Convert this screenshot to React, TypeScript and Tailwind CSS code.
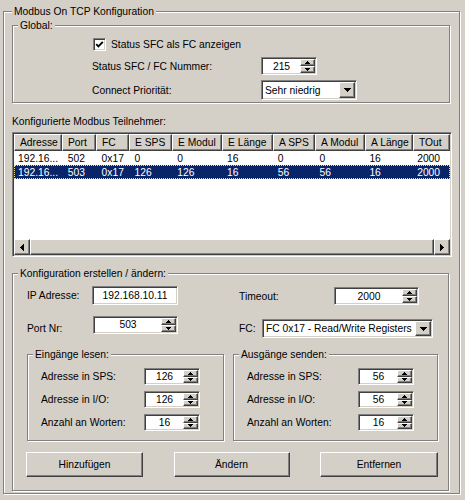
import React from "react";

const etched = "border border-[#808080] shadow-[inset_1px_1px_0_#fff,1px_1px_0_#fff]";
const sunken =
  "border border-t-[#808080] border-l-[#808080] border-r-white border-b-white shadow-[inset_1px_1px_0_#404040,inset_-1px_-1px_0_#d4d0c8]";
const raised =
  "border border-t-white border-l-white border-r-[#404040] border-b-[#404040] shadow-[inset_-1px_-1px_0_#808080] bg-[#d4d0c8]";

type Dir = "up" | "down" | "left" | "right";

const Arrow = ({ dir, size = "sm" }: { dir: Dir; size?: "sm" | "md" }) => {
  const s = size === "sm" ? 3 : 4;
  if (dir === "up" || dir === "down") {
    const w = s * 2 - 1;
    const d = dir === "up" ? `M${w / 2} 0 L${w} ${s} L0 ${s}Z` : `M0 0 L${w} 0 L${w / 2} ${s}Z`;
    return (
      <svg width={w} height={s} viewBox={`0 0 ${w} ${s}`} shapeRendering="crispEdges">
        <path d={d} fill="#000" />
      </svg>
    );
  }
  const h = s * 2 - 1;
  const d = dir === "left" ? `M0 ${h / 2} L${s} 0 L${s} ${h}Z` : `M0 0 L${s} ${h / 2} L0 ${h}Z`;
  return (
    <svg width={s} height={h} viewBox={`0 0 ${s} ${h}`} shapeRendering="crispEdges">
      <path d={d} fill="#000" />
    </svg>
  );
};

const SpinBox = ({ value, className }: { value: string; className: string }) => (
  <div className={`flex bg-white p-[1px] ${sunken} ${className}`}>
    <span className="flex-1 flex items-center justify-center">{value}</span>
    <div className="flex flex-col w-[15px]">
      <div className={`flex-1 flex items-center justify-center ${raised}`}>
        <Arrow dir="up" />
      </div>
      <div className={`flex-1 flex items-center justify-center ${raised}`}>
        <Arrow dir="down" />
      </div>
    </div>
  </div>
);

const Combo = ({ value, className }: { value: string; className: string }) => (
  <div className={`flex bg-white p-[1px] ${sunken} ${className}`}>
    <span className="flex-1 flex items-center pl-[2px] whitespace-nowrap overflow-hidden">{value}</span>
    <div className={`w-[16px] flex items-center justify-center ${raised}`}>
      <Arrow dir="down" size="md" />
    </div>
  </div>
);

const Button = ({ label, className }: { label: string; className: string }) => (
  <div className={`h-[25px] flex items-center justify-center ${raised} ${className}`}>{label}</div>
);

const columns = [
  { name: "Adresse", w: "w-[48px]" },
  { name: "Port", w: "w-[34px]" },
  { name: "FC", w: "w-[33px]" },
  { name: "E SPS", w: "w-[43px]" },
  { name: "E Modul", w: "w-[50px]" },
  { name: "E Länge", w: "w-[51px]" },
  { name: "A SPS", w: "w-[42px]" },
  { name: "A Modul", w: "w-[50px]" },
  { name: "A Länge", w: "w-[48px]" },
  { name: "TOut", w: "w-[37px]" },
];

const rows = [
  ["192.16...", "502", "0x17", "0", "0", "16", "0", "0", "16", "2000"],
  ["192.16...", "503", "0x17", "126", "126", "16", "56", "56", "16", "2000"],
];

const FieldRow = ({ label, labelW, value }: { label: string; labelW: string; value: string }) => (
  <div className="flex items-center h-[17px]">
    <span className={labelW}>{label}</span>
    <SpinBox value={value} className="w-[56px] h-[17px]" />
  </div>
);

export default function App() {
  return (
    <div className="w-[465px] h-[500px] bg-[#d4d0c8] pl-[3px] pt-[5px] text-[10.3px] leading-[13px] text-black font-['Liberation_Sans',Arial,sans-serif]">
      <fieldset className={`w-[455px] h-[489px] pl-[8px] pr-[7px] ${etched}`}>
        <legend className="px-[2px] bg-[#d4d0c8]">Modbus On TCP Konfiguration</legend>

        <fieldset className={`mt-[1px] w-[438px] ${etched}`}>
          <legend className="ml-[5px] px-[2px] bg-[#d4d0c8]">Global:</legend>
          <div className="pl-[79px] pb-[2px]">
            <div className="mt-[6px] ml-[1px] flex items-center gap-[5px] h-[13px]">
              <div className={`w-[13px] h-[13px] bg-white flex items-center justify-center ${sunken}`}>
                <svg width="9" height="9" viewBox="0 0 9 9">
                  <path d="M1.2 4.2 L3.4 6.4 L7.8 1.8" stroke="#000" strokeWidth="1.9" fill="none" />
                </svg>
              </div>
              <span>Status SFC als FC anzeigen</span>
            </div>
            <div className="mt-[6px] flex items-center">
              <span className="w-[169px]">Status SFC / FC Nummer:</span>
              <SpinBox value="215" className="w-[56px] h-[18px]" />
            </div>
            <div className="mt-[5px] flex items-center">
              <span className="w-[169px]">Connect Priorität:</span>
              <Combo value="Sehr niedrig" className="w-[96px] h-[20px]" />
            </div>
          </div>
        </fieldset>

        <div className="mt-[12px]">Konfigurierte Modbus Teilnehmer:</div>

        <div className={`mt-[4px] w-[440px] h-[125px] bg-white flex flex-col ${sunken} p-[1px]`}>
          <div className="flex h-[17px] shrink-0">
            {columns.map((c) => (
              <div key={c.name} className={`${c.w} h-full flex items-center pl-[5px] whitespace-nowrap overflow-hidden ${raised}`}>
                {c.name}
              </div>
            ))}
          </div>
          {rows.map((r, i) => (
            <div
              key={i}
              className={`flex h-[14px] shrink-0 border ${
                i === 1 ? "bg-[#0a246a] text-white border-dotted border-[#e6dc9a]" : "border-transparent"
              }`}
            >
              {r.map((v, j) => (
                <div
                  key={j}
                  className={`${columns[j].w} ${j === 0 ? "pl-[3px]" : "pl-[5px]"} flex items-center whitespace-nowrap overflow-hidden`}
                >
                  {v}
                </div>
              ))}
            </div>
          ))}
          <div className="flex-1" />
          <div className="flex h-[16px] shrink-0 bg-[#d4d0c8]">
            <div className={`w-[16px] flex items-center justify-center ${raised}`}>
              <Arrow dir="left" size="md" />
            </div>
            <div className={`flex-1 ${raised}`} />
            <div className={`w-[16px] flex items-center justify-center ${raised}`}>
              <Arrow dir="right" size="md" />
            </div>
          </div>
        </div>

        <fieldset className={`mt-[10px] w-[437px] ${etched}`}>
          <legend className="ml-[5px] px-[2px] bg-[#d4d0c8]">Konfiguration erstellen / ändern:</legend>
          <div className="pl-[14px] pr-[10px] pb-[13px]">
            <div className="mt-[6px] flex">
              <div className="flex flex-col w-[151px]">
                <div className="flex items-center">
                  <span className="w-[65px]">IP Adresse:</span>
                  <div className={`w-[86px] h-[19px] bg-white flex items-center justify-center ${sunken}`}>192.168.10.11</div>
                </div>
                <div className="mt-[9px] flex items-center">
                  <span className="w-[66px] pt-[8px]">Port Nr:</span>
                  <SpinBox value="503" className="w-[85px] h-[18px]" />
                </div>
              </div>
              <div className="ml-[61px] flex flex-col">
                <div className="mt-[1px] flex items-center">
                  <span className="w-[95px]">Timeout:</span>
                  <SpinBox value="2000" className="w-[85px] h-[18px]" />
                </div>
                <div className="mt-[14px] flex items-center">
                  <span className="w-[23px]">FC:</span>
                  <Combo value="FC 0x17 - Read/Write Registers" className="w-[171px] h-[19px]" />
                </div>
              </div>
            </div>

            <div className="mt-[10px] flex gap-[9px]">
              <fieldset className={`w-[197px] ${etched}`}>
                <legend className="ml-[5px] px-[2px] bg-[#d4d0c8]">Eingänge lesen:</legend>
                <div className="pl-[13px] pt-[7px] pb-[9px] flex flex-col gap-[6px]">
                  <FieldRow label="Adresse in SPS:" labelW="w-[103px]" value="126" />
                  <FieldRow label="Adresse in I/O:" labelW="w-[103px]" value="126" />
                  <FieldRow label="Anzahl an Worten:" labelW="w-[103px]" value="16" />
                </div>
              </fieldset>
              <fieldset className={`w-[205px] ${etched}`}>
                <legend className="ml-[5px] px-[2px] bg-[#d4d0c8]">Ausgänge senden:</legend>
                <div className="pl-[13px] pt-[7px] pb-[9px] flex flex-col gap-[6px]">
                  <FieldRow label="Adresse in SPS:" labelW="w-[111px]" value="56" />
                  <FieldRow label="Adresse in I/O:" labelW="w-[111px]" value="56" />
                  <FieldRow label="Anzahl an Worten:" labelW="w-[111px]" value="16" />
                </div>
              </fieldset>
            </div>

            <div className="mt-[11px] -ml-[1px] flex justify-between">
              <Button label="Hinzufügen" className="w-[117px]" />
              <Button label="Ändern" className="w-[116px]" />
              <Button label="Entfernen" className="w-[118px]" />
            </div>
          </div>
        </fieldset>
      </fieldset>
    </div>
  );
}
